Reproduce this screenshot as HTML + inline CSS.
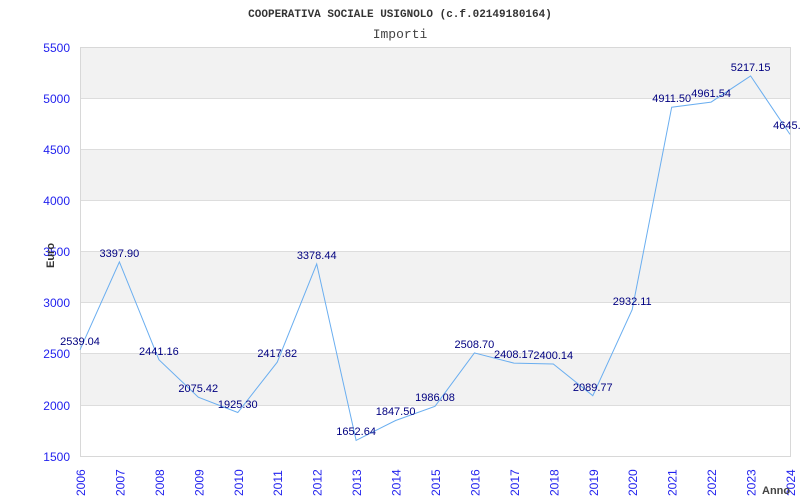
<!DOCTYPE html>
<html><head><style>html,body{margin:0;padding:0;background:#fff;width:800px;height:500px;overflow:hidden}</style></head>
<body>
<svg width="800" height="500" xmlns="http://www.w3.org/2000/svg" style="display:block">
<text x="400" y="17" text-anchor="middle" font-family="Liberation Mono, monospace" font-weight="bold" font-size="11" fill="#333">COOPERATIVA SOCIALE USIGNOLO (c.f.02149180164)</text>
<text x="400" y="38" text-anchor="middle" font-family="Liberation Mono, monospace" font-size="13" fill="#444">Importi</text>
<g>
<rect x="80" y="47" width="710" height="51" fill="#f2f2f2"/>
<rect x="80" y="149" width="710" height="51" fill="#f2f2f2"/>
<rect x="80" y="251" width="710" height="51" fill="#f2f2f2"/>
<rect x="80" y="354" width="710" height="51" fill="#f2f2f2"/>
</g>
<g stroke="#ddd" stroke-width="1">
<line x1="80" y1="98.5" x2="790" y2="98.5"/>
<line x1="80" y1="149.5" x2="790" y2="149.5"/>
<line x1="80" y1="200.5" x2="790" y2="200.5"/>
<line x1="80" y1="251.5" x2="790" y2="251.5"/>
<line x1="80" y1="302.5" x2="790" y2="302.5"/>
<line x1="80" y1="353.5" x2="790" y2="353.5"/>
<line x1="80" y1="405.5" x2="790" y2="405.5"/>
</g>
<rect x="80.5" y="47.5" width="710" height="409" fill="none" stroke="#d8d8d8"/>
<g font-family="Liberation Sans, sans-serif" font-size="12" fill="#2222ee" text-anchor="end">
<text x="70" y="52">5500</text><text x="70" y="103">5000</text><text x="70" y="154">4500</text><text x="70" y="205">4000</text><text x="70" y="256">3500</text><text x="70" y="307">3000</text><text x="70" y="358">2500</text><text x="70" y="410">2000</text><text x="70" y="461">1500</text>
</g>
<text transform="translate(54,268) rotate(-90)" font-family="Liberation Sans, sans-serif" font-weight="bold" font-size="11" fill="#333">Euro</text>
<g font-family="Liberation Sans, sans-serif" font-size="12" fill="#2222ee">
<text transform="translate(85,496) rotate(-90)">2006</text>
<text transform="translate(124.4,496) rotate(-90)">2007</text>
<text transform="translate(163.9,496) rotate(-90)">2008</text>
<text transform="translate(203.3,496) rotate(-90)">2009</text>
<text transform="translate(242.8,496) rotate(-90)">2010</text>
<text transform="translate(282.2,496) rotate(-90)">2011</text>
<text transform="translate(321.7,496) rotate(-90)">2012</text>
<text transform="translate(361.1,496) rotate(-90)">2013</text>
<text transform="translate(400.6,496) rotate(-90)">2014</text>
<text transform="translate(440,496) rotate(-90)">2015</text>
<text transform="translate(479.4,496) rotate(-90)">2016</text>
<text transform="translate(518.9,496) rotate(-90)">2017</text>
<text transform="translate(558.3,496) rotate(-90)">2018</text>
<text transform="translate(597.8,496) rotate(-90)">2019</text>
<text transform="translate(637.2,496) rotate(-90)">2020</text>
<text transform="translate(676.7,496) rotate(-90)">2021</text>
<text transform="translate(716.1,496) rotate(-90)">2022</text>
<text transform="translate(755.6,496) rotate(-90)">2023</text>
<text transform="translate(795,496) rotate(-90)">2024</text>
</g>
<text x="762" y="494" font-family="Liberation Sans, sans-serif" font-weight="bold" font-size="11" fill="#444">Anno</text>
<polyline fill="none" stroke="#6aaef0" stroke-width="1" points="80,349.8 119.4,261.9 158.9,359.7 198.3,397.2 237.8,412.5 277.2,362.2 316.7,263.9 356.1,440.4 395.6,420.5 435,406.3 474.4,352.9 513.9,363.1 553.3,364 592.8,395.7 632.2,309.6 671.7,107.2 711.1,102.1 750.6,75.9 790,134.4"/>
<g font-family="Liberation Sans, sans-serif" font-size="11" fill="#000080" text-anchor="middle">
<text x="80" y="345">2539.04</text>
<text x="119.4" y="257">3397.90</text>
<text x="158.9" y="355">2441.16</text>
<text x="198.3" y="392">2075.42</text>
<text x="237.8" y="408">1925.30</text>
<text x="277.2" y="357">2417.82</text>
<text x="316.7" y="259">3378.44</text>
<text x="356.1" y="435">1652.64</text>
<text x="395.6" y="415">1847.50</text>
<text x="435" y="401">1986.08</text>
<text x="474.4" y="348">2508.70</text>
<text x="513.9" y="358">2408.17</text>
<text x="553.3" y="359">2400.14</text>
<text x="592.8" y="391">2089.77</text>
<text x="632.2" y="305">2932.11</text>
<text x="671.7" y="102">4911.50</text>
<text x="711.1" y="97">4961.54</text>
<text x="750.6" y="71">5217.15</text>
<text x="790" y="129">4645.7</text>
</g>
</svg>
</body></html>
